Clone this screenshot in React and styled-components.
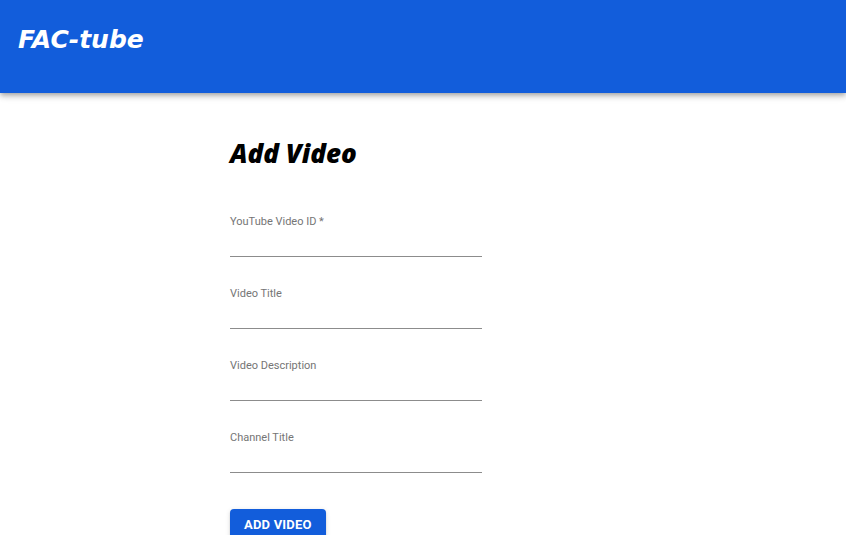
import React from 'react';
import styled, { createGlobalStyle } from 'styled-components';

const GlobalStyle = createGlobalStyle`
  body {
    margin: 0;
    background: #fff;
    font-family: Roboto, "Liberation Sans", sans-serif;
  }
`;

const Header = styled.header`
  height: 93px;
  background-color: #125ddb;
  display: flex;
  align-items: center;
  padding: 0 18px;
  box-shadow: 0 2px 4px -1px rgba(0, 0, 0, 0.2), 0 4px 5px 0 rgba(0, 0, 0, 0.14),
    0 1px 10px 0 rgba(0, 0, 0, 0.12);
`;

const Logo = styled.h1`
  margin: 0 0 14px;
  color: #fff;
  font-family: "DejaVu Sans", sans-serif;
  font-style: italic;
  font-weight: 700;
  font-size: 25px;
`;

const Main = styled.main`
  width: 386px;
  margin: 0 auto;
  padding-top: 42px;
`;

const Title = styled.h2`
  margin: 0 0 44px;
  font-family: "Open Sans", sans-serif;
  font-style: italic;
  font-weight: 800;
  font-size: 26px;
  line-height: 36px;
  color: #000;
`;

const Form = styled.form`
  display: flex;
  flex-direction: column;
  gap: 30px;
  width: 252px;
`;

const Field = styled.label`
  display: flex;
  flex-direction: column;
`;

const Label = styled.span`
  font-size: 11px;
  line-height: 13px;
  color: #757575;
`;

const Input = styled.input`
  height: 28px;
  border: none;
  border-bottom: 1px solid #8c8c8c;
  padding: 0;
  outline: none;
  font: inherit;
  font-size: 14px;
`;

const Button = styled.button`
  align-self: flex-start;
  margin-top: 6px;
  height: 36px;
  padding: 0 14px 6px;
  border: none;
  border-radius: 4px;
  background-color: #125ddb;
  color: #fff;
  font-family: Roboto, sans-serif;
  font-weight: 700;
  font-size: 13px;
  letter-spacing: 0.2px;
  text-transform: uppercase;
  box-shadow: 0 3px 1px -2px rgba(0, 0, 0, 0.2), 0 2px 2px 0 rgba(0, 0, 0, 0.14),
    0 1px 5px 0 rgba(0, 0, 0, 0.12);
`;

const fields = ['YouTube Video ID *', 'Video Title', 'Video Description', 'Channel Title'];

const App = () => {
  return (
    <>
      <GlobalStyle />
      <Header>
        <Logo>FAC-tube</Logo>
      </Header>
      <Main>
        <Title>Add Video</Title>
        <Form onSubmit={(e) => e.preventDefault()}>
          {fields.map((f) => (
            <Field key={f}>
              <Label>{f}</Label>
              <Input />
            </Field>
          ))}
          <Button type="submit">Add Video</Button>
        </Form>
      </Main>
    </>
  );
};

export default App;
